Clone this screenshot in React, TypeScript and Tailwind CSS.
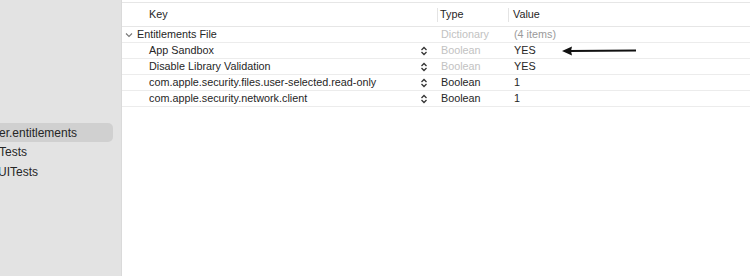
const ROWS = [
  { key: "App Sandbox", type: "Boolean", value: "YES", dim: true },
  { key: "Disable Library Validation", type: "Boolean", value: "YES", dim: true },
  { key: "com.apple.security.files.user-selected.read-only", type: "Boolean", value: "1", dim: false },
  { key: "com.apple.security.network.client", type: "Boolean", value: "1", dim: false },
];

function Stepper() {
  return (
    <svg width="8" height="10" viewBox="0 0 8 10" className="shrink-0">
      <path d="M1.5 4 L4 1.5 L6.5 4" fill="none" stroke="#333" strokeWidth="1.3" />
      <path d="M1.5 6 L4 8.5 L6.5 6" fill="none" stroke="#333" strokeWidth="1.3" />
    </svg>
  );
}

export default function App() {
  return (
    <div
      className="flex w-[750px] h-[276px] overflow-hidden bg-white text-[#262626]"
      style={{ fontFamily: '"Liberation Sans", Arial, sans-serif' }}
    >
      {/* Sidebar */}
      <aside className="w-[122px] shrink-0 bg-[#e3e3e3] border-r border-[#dadada] pt-[123px] overflow-hidden">
        <div className="h-[19px] w-[113px] rounded-r-[5px] bg-[#d0d0d0] flex items-center">
          <span className="text-[12px] -ml-[1px] whitespace-nowrap">er.entitlements</span>
        </div>
        <div className="h-[20px] flex items-center">
          <span className="text-[12px] -ml-[1px]">Tests</span>
        </div>
        <div className="h-[19px] flex items-center">
          <span className="text-[12px] -ml-[2px]">UITests</span>
        </div>
      </aside>

      {/* Property list */}
      <main className="relative flex-1 text-[10.8px]">
        <div className="h-[3px] border-b border-[#e6e6e6]" />
        <div className="flex h-[24px] items-center border-b border-[#e6e6e6]">
          <div className="w-[315px] pl-[27px]">Key</div>
          <div className="w-[71px] h-[14px] border-l border-[#e4e4e4] pl-[2px] flex items-center">Type</div>
          <div className="h-[14px] border-l border-[#e4e4e4] pl-[4px] flex items-center">Value</div>
        </div>

        <div className="flex h-[16px] items-center border-b border-[#ececec]">
          <div className="w-[315px] pl-[3px] flex items-center">
            <svg width="8" height="6" viewBox="0 0 8 6" className="mr-[4px]">
              <path d="M1 1.5 L4 4.5 L7 1.5" fill="none" stroke="#777" strokeWidth="1.1" />
            </svg>
            <span>Entitlements File</span>
          </div>
          <div className="w-[71px] pl-[4px] text-[#c2c2c2]">Dictionary</div>
          <div className="pl-[6px] text-[#9a9a9a]">(4 items)</div>
        </div>

        {ROWS.map((r) => (
          <div key={r.key} className="flex h-[16px] items-center border-b border-[#ececec]">
            <div className="w-[315px] pl-[27px] pr-[9px] flex items-center justify-between">
              <span>{r.key}</span>
              <Stepper />
            </div>
            <div className={`w-[71px] pl-[4px] ${r.dim ? "text-[#c2c2c2]" : ""}`}>{r.type}</div>
            <div className="pl-[6px]">{r.value}</div>
          </div>
        ))}

        {/* annotation arrow */}
        <svg className="absolute left-[439px] top-[45px]" width="78" height="12" viewBox="0 0 78 12">
          <path d="M8 6 L75 5.5" stroke="#111" strokeWidth="2" />
          <path d="M1 6 L11 1.5 L10 6 L11 10.5 Z" fill="#111" />
        </svg>
      </main>
    </div>
  );
}
